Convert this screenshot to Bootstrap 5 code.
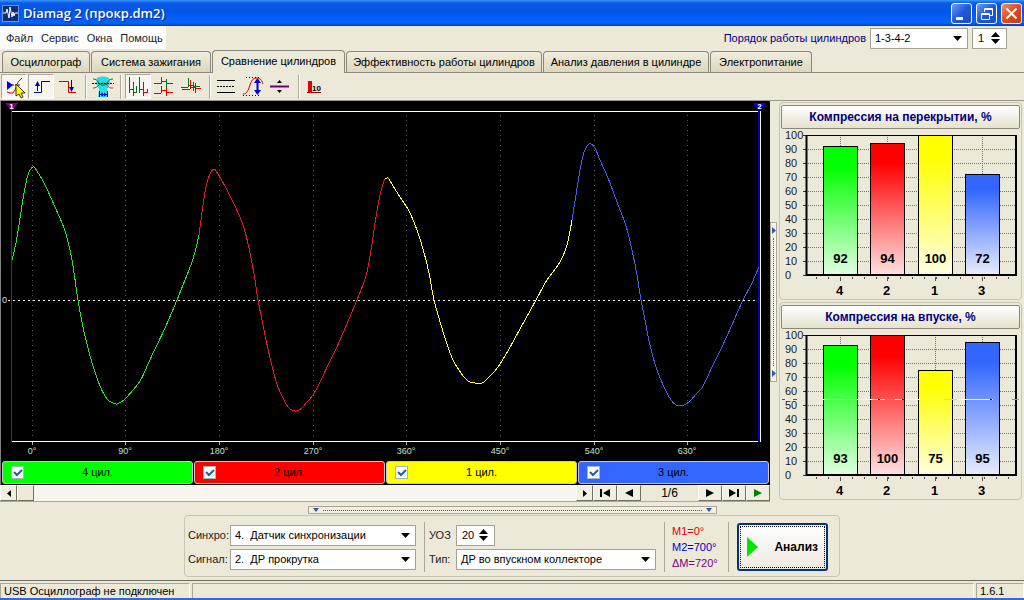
<!DOCTYPE html>
<html lang="ru">
<head>
<meta charset="utf-8">
<meta name="viewport" content="width=device-width, initial-scale=1">
<title>Diamag 2 (прокр.dm2)</title>
<link href="https://cdn.jsdelivr.net/npm/bootstrap@5.3.0/dist/css/bootstrap.min.css" rel="stylesheet">
<style>
:root { --face:#ece9d8; --line:#aca899; --dark:#716f64; --navy:#000080; }
body { font-family:"Liberation Sans",Arial,sans-serif; font-size:11px; line-height:16px; color:#000; background:var(--face); min-height:100vh; }
button { font:inherit; color:inherit; }
.titlebar { height:26px; padding:0 2px; background:linear-gradient(#3b96ff 0,#0a5ae8 3px,#0355e4 10px,#0560fb 20px,#0362f8 23px,#0040c0 26px); color:#fff; }
.titlebar h1 { font:600 13px/18px "Open Sans",sans-serif; text-shadow:1px 1px 1px #0a2a80; }
.winbtn { width:21px; height:21px; border:1px solid #fff; border-radius:3px; padding:0; background:linear-gradient(135deg,#6d9cf5,#2058dc 50%,#1c4bc6); }
.winclose { background:linear-gradient(135deg,#f0906c,#dd4b22 50%,#c43c14); }
.menurow { height:24px; }
.menubox { background:#fff; width:166px; height:23px; padding-left:6px; gap:8px; }
.menubox a { color:#222; }
.orderbox { padding-right:17px; color:var(--navy); }
.field { background-color:#fff; border:1px solid #a5a295; border-radius:0; font:inherit; color:#000; padding:0 20px 0 4px; min-height:0; height:21px; background-size:9px 5px; background-position:right 5px center;
 background-image:url("data:image/svg+xml,%3Csvg xmlns='http://www.w3.org/2000/svg' viewBox='0 0 9 5'%3E%3Cpath d='M0 0H9L4.500 5z'/%3E%3C/svg%3E"); }
.order-sel { width:98px; }
.spin { background:#fff; border:1px solid #a5a295; height:21px; }
.spin input { border:0; padding:0 0 0 5px; width:18px; font:inherit; outline:0; background:transparent; }
.spin input.two-digit { width:22px; }
.spin button { border:0; background:none; padding:0; width:11px; height:7px; display:flex; align-items:center; }
.tabrow { height:23px; padding-left:2px; border-bottom:1px solid #8b887b; flex-wrap:nowrap; align-items:flex-end; }
.tabrow .nav-link { height:21px; padding:2px 0 0; text-align:center; color:#000; line-height:16px; border:1px solid #8b887b; border-bottom:0; border-radius:4px 4px 0 0; background:linear-gradient(#f0edde,#dcd8bd); margin:0 1px 0 0; white-space:nowrap; }
.tabrow .nav-link.active { height:23px; margin-bottom:-1px; background:var(--face); color:#000; border-color:#8b887b; }
.tab-s { width:88px; } .tab-m { width:102px; } .tab-l { width:120px; } .tab-c { width:133px; } .tab-xl { width:166px; } .tab-xxl { width:196px; }
.tools { height:28px; border-bottom:1px solid #9a978a; padding:0 1px; }
.tool { width:26px; height:25px; border:1px solid transparent; padding:0; background:none; margin-right:1px; }
.tool svg { display:block; margin:-1px; }
.tool.on { background:#f7f5ef; border-color:#aca899 #fff #fff #aca899; }
.vsep { width:2px; height:24px; border-left:1px solid var(--line); border-right:1px solid #fff; margin:0 3px; }
.scopecol { border-left:1px solid #808080; background:#000; }
.scope { display:block; width:100%; height:auto; }
.chanrow { padding:0 1px 1px; gap:1px; }
.chan { flex:1 1 0; height:23px; border:1px solid #c8c8c8; border-radius:3px; position:relative; }
.chan label { text-align:center; width:100%; line-height:20px; }
.chan input { position:absolute; left:8px; top:4px; width:13px; height:13px; margin:0; border:1px solid #1c5180; border-radius:0 !important; background-color:#fff !important; }
.chan input:checked { border-color:#9bb; background-image:url("data:image/svg+xml,%3Csvg xmlns='http://www.w3.org/2000/svg' viewBox='0 0 13 13'%3E%3Cpath d='M3 6l3 3 5-5' fill='none' stroke='%23245ca8' stroke-width='2'/%3E%3C/svg%3E") !important; background-size:13px; }
.navrow { background:var(--face); height:17px; border-bottom:1px solid var(--line); }
.navbtn { height:16px; width:24px; border:1px solid; border-color:#fff var(--dark) var(--dark) #fff; background:#f1eee2; padding:0; display:flex; align-items:center; justify-content:center; }
.navbtn.slim { width:17px; }
.pageno { width:57px; text-align:center; font-size:12px; }
.hscroll { appearance:none; height:16px; margin:0; background:#f7f5ef; min-width:0; }
.hscroll::-webkit-slider-thumb { appearance:none; width:17px; height:16px; border:1px solid; border-color:#fff var(--dark) var(--dark) #fff; background:var(--face); border-radius:0; }
.vsplit { width:8px; }
.vgrip { width:7px; height:160px; border:1px solid var(--line); background:#f7f5ea; }
.vdots { border-left:1px dotted #555; }
.hgrip { width:409px; height:8px; border:1px solid var(--line); background:#f3f0e2; margin:4px auto 1px; }
.hdots { border-top:1px dotted #555; }
.sidecol { width:246px; padding:1px 2px 0 1px; gap:2px; }
.panel { border:1px solid #c9c5b2; border-radius:4px; padding:2px 1px 0; }
.panel h2 { font-size:12px; line-height:22px; height:24px; font-weight:bold; color:var(--navy); text-align:center; margin:0; border:1px solid #8b887b; border-radius:2px; background:linear-gradient(#fff,#e6e2cd); }
.panel svg { display:block; width:100%; height:auto; }
.bottom { width:656px; max-width:100%; height:62px; border:1px solid #c9c5b2; border-radius:4px; padding:2px 3px 0; margin:0 auto 3px; }
.rows { gap:3px; }
.flabel { width:42px; color:#222; }
.flabel.thin { width:27px; }
.wide-sel { width:186px; }
.type-sel { width:200px; }
.bar-v { width:1px; height:50px; background:var(--line); }
.marks { width:63px; padding-left:7px; }
.m-red { color:#e00000; } .m-blue { color:#0000d0; } .m-violet { color:#800080; }
.gobtn { width:91px; height:48px; border:2px solid #00337a; border-radius:3px; background:linear-gradient(#fff,#ece9df); outline:1px dotted #000; outline-offset:-4px; font-weight:bold; font-size:12px; }
.status { height:20px; border-top:1px solid var(--dark); border-bottom:2px solid #2b6fd6; padding-top:2px; gap:2px; }
.status > div { border:1px solid; border-color:var(--line) #fff #fff var(--line); border-bottom:0; padding-left:3px; line-height:15px; }
.st-a { width:190px; } .st-c { width:48px; }
</style>
</head>
<body class="d-flex flex-column">
<header class="titlebar d-flex align-items-center">
 <svg width="17" height="17" viewBox="0 0 17 17"><rect width="17" height="17" fill="#0a2f78"/><rect x=".5" y=".5" width="16" height="16" fill="none" stroke="#6f93d6"/><path d="M1 8h3l1-4 2 9 1-11 2 10 1-5 1 4 1-3h3" fill="none" stroke="#fff"/></svg>
 <h1 class="m-0 ms-1 flex-grow-1">Diamag 2 (прокр.dm2)</h1>
 <div class="d-flex gap-1">
  <button class="winbtn" aria-label="Свернуть"><svg width="19" height="19" class="d-block"><path d="M4 13h7v3H4z" fill="#fff"/></svg></button>
  <button class="winbtn" aria-label="Развернуть"><svg width="19" height="19" class="d-block"><path d="M7.500 8V4.500h8v7H13M7 5.500h9M4.500 9.500h8v6h-8zM4 10.500h9" fill="none" stroke="#fff"/></svg></button>
  <button class="winbtn winclose" aria-label="Закрыть"><svg width="19" height="19" class="d-block"><path d="M4.500 4.500l10 10m0-10l-10 10" stroke="#fff" stroke-width="2"/></svg></button>
 </div>
</header>

<div class="menurow d-flex justify-content-between">
 <nav class="menubox d-flex align-items-center">
  <a class="text-decoration-none" href="#">Файл</a><a class="text-decoration-none" href="#">Сервис</a><a class="text-decoration-none" href="#">Окна</a><a class="text-decoration-none" href="#">Помощь</a>
 </nav>
 <div class="orderbox d-flex align-items-center">
  <label for="order" class="me-1">Порядок работы цилиндров</label>
  <select id="order" class="form-select field order-sel me-1"><option>1-3-4-2</option></select>
  <div class="spin d-flex align-items-center"><input aria-label="Номер цилиндра" value="1"><div class="d-flex flex-column me-1"><button aria-label="Больше"><svg width="9" height="5"><path d="M0 5L4.500 0 9 5z"/></svg></button><button aria-label="Меньше"><svg width="9" height="5"><path d="M0 0H9L4.500 5z"/></svg></button></div></div>
 </div>
</div>

<nav class="nav nav-tabs tabrow" id="tabs">
 <a class="nav-link tab-s" href="#">Осциллограф</a>
 <a class="nav-link tab-l" href="#">Система зажигания</a>
 <a class="nav-link active tab-c" href="#">Сравнение цилиндров</a>
 <a class="nav-link tab-xxl" href="#">Эффективность работы цилиндров</a>
 <a class="nav-link tab-xl" href="#">Анализ давления в цилиндре</a>
 <a class="nav-link tab-m" href="#">Электропитание</a>
</nav>

<div class="tools d-flex align-items-center">
 <button class="tool on" aria-label="Маркеры"><svg width="26" height="25" fill="none"><path d="M6 18l3 1h3l2-3 3-8 4-4" stroke="#d00000"/><path d="M11 11h9" stroke="#0000c0" stroke-dasharray="2 1"/><path d="M6 7v9l6-5z" fill="#0000e0"/><path d="M15 10v12l3-2 2 4 2-1-2-4h4z" fill="#ffff00" stroke="#403000"/></svg></button>
 <button class="tool on" aria-label="Фронт"><svg width="26" height="25" fill="none"><path d="M6 18.500h7.500v-11H22" stroke="#0000a0"/><path d="M9.500 17V8" stroke="#0000a0"/><path d="M7 12l2.500-5 2.500 5z" fill="#0000a0"/></svg></button>
 <button class="tool" aria-label="Спад"><svg width="26" height="25" fill="none"><path d="M4 7.500h9.500v11H21" stroke="#d00000"/><path d="M16.500 6v9" stroke="#0000a0"/><path d="M14 13l2.500 5 2.500-5z" fill="#0000a0"/></svg></button>
 <div class="vsep"></div>
 <button class="tool" aria-label="Фильтр"><svg width="26" height="25" fill="none"><path d="M7 4c2-2 10-2 12 0l1 6-3 5 1 8H8l1-8-3-5z" fill="#20e0e8"/><path d="M3 5c3 0 4 1 6 4s6 3 8 0 3-4 6-4" stroke="#008020"/><path d="M3 14c3 0 4-1 6-3s6-3 8 0 3 3 6 3" stroke="#d03020"/><path d="M2 9.500h22" stroke="#000" stroke-dasharray="2 1"/><path d="M9.500 17v6m8-6v6M10 20.500h7" stroke="#0000c0"/><path d="M10 20.500l3-2v4zM17 20.500l-3-2v4z" fill="#0000c0"/></svg></button>
 <div class="vsep"></div>
 <button class="tool on" aria-label="Последовательно"><svg width="26" height="25" fill="none" shape-rendering="crispEdges"><path d="M4.500 3v16M4.500 15.500h4M8.500 8v14M8.500 18.500h3V12" stroke="#007020"/><path d="M14.500 3v16M14.500 15.500h4M18.500 8v14M18.500 18.500h4V15" stroke="#e00000"/></svg></button>
 <button class="tool" aria-label="Раздельно"><svg width="26" height="25" fill="none" shape-rendering="crispEdges"><path d="M2 9.500h7V3M9.500 3v5M10 7.500h4M14.500 5v9M15 9.500h6" stroke="#007020"/><path d="M2 19.500h7M9.500 12v7M10 16.500h4M14.500 13v9M15 18.500h6" stroke="#e00000"/></svg></button>
 <button class="tool" aria-label="Наложение"><svg width="26" height="25" fill="none" shape-rendering="crispEdges"><path d="M2 13.500h7M9.500 4v9M10 11.500h4M14.500 8v9M15 12.500h6" stroke="#007020"/><path d="M3 15.500h8M11.500 6v9M12 13.500h4M16.500 9v10M17 14.500h5" stroke="#e00000"/></svg></button>
 <div class="vsep"></div>
 <button class="tool" aria-label="Сетка"><svg width="26" height="25" fill="none"><path d="M3 6.500h18M3 18.500h18" stroke="#000"/><path d="M3 12.500h18" stroke="#000" stroke-dasharray="2 1"/></svg></button>
 <button class="tool" aria-label="Масштаб"><svg width="26" height="25" fill="none"><path d="M2 20c4 0 5-3 7-9s4-7 7-7 5 2 6 6" stroke="#d00000"/><path d="M5 3.500h14M2 21.500h18" stroke="#000" stroke-dasharray="1 2"/><path d="M16.500 7v12" stroke="#0000d0" stroke-width="2"/><path d="M13 9l3.500-5L20 9zM13 16l3.500 5 3.500-5z" fill="#0000d0"/></svg></button>
 <button class="tool" aria-label="Нулевая линия"><svg width="26" height="25" fill="none"><path d="M2 12.500h19" stroke="#700070" stroke-width="2"/><path d="M9 9l2.500-3L14 9zM9 16l2.500 3 2.500-3z" fill="#000"/></svg></button>
 <div class="vsep"></div>
 <button class="tool" aria-label="Гистограмма"><svg width="26" height="25"><path d="M5 7h4v11H5z" fill="#e00000"/><path d="M4 18.500h14" stroke="#a00000"/><text x="9" y="17" font-size="8" font-weight="bold">10</text></svg></button>
</div>

<main class="d-flex flex-grow-1">
 <section class="flex-grow-1 d-flex flex-column">
  <div class="scopecol">
   <svg class="scope" viewBox="1 101 769 360" id="scope" font-size="9">
    <g stroke="#5a5a5a" stroke-dasharray="1 4" shape-rendering="crispEdges"><path d="M32.500 115V440M125.500 115V440M219.500 115V440M313.500 115V440M406.500 115V440M500.500 115V440M594.500 115V440M687.500 115V440"/></g>
    <path d="M12 111.500H760.500V441.500H12" fill="none" stroke="#fff" shape-rendering="crispEdges"/>
    <path d="M32.500 442v3m93-3v3m94-3v3m94-3v3m93-3v3m94-3v3m94-3v3m93-3v3" stroke="#aaa"/>
    <path d="M8 300.500H760" stroke="#fff" stroke-dasharray="2 3" shape-rendering="crispEdges"/>
    <path d="M11.500 108V442" stroke="#7a1070" shape-rendering="crispEdges"/>
    <path d="M759 108V442" stroke="#0000c0" stroke-width="2"/>
    <path d="M5 103h13l-6 8z" fill="#800080"/><path d="M753 103h13l-6 8z" fill="#0000f0"/>
    <g id="waves" fill="none" shape-rendering="crispEdges"></g>
    <g fill="#fff" font-weight="bold" font-size="8" text-anchor="middle"><text x="11.500" y="109">1</text><text x="759.500" y="109">2</text></g>
    <text x="2" y="303" fill="#ddd">0</text>
    <g fill="#c8e0c8" text-anchor="middle"><text x="32" y="454">0°</text><text x="125" y="454">90°</text><text x="219" y="454">180°</text><text x="313" y="454">270°</text><text x="406" y="454">360°</text><text x="500" y="454">450°</text><text x="594" y="454">540°</text><text x="687" y="454">630°</text></g>
   </svg>
   <div class="chanrow d-flex">
    <div class="chan" style="background:#0f0"><input class="form-check-input" type="checkbox" id="c4" checked><label for="c4">4 цил.</label></div>
    <div class="chan" style="background:#f00"><input class="form-check-input" type="checkbox" id="c2" checked><label for="c2">2 цил.</label></div>
    <div class="chan" style="background:#ff0"><input class="form-check-input" type="checkbox" id="c1" checked><label for="c1">1 цил.</label></div>
    <div class="chan" style="background:#36f"><input class="form-check-input" type="checkbox" id="c3" checked><label for="c3">3 цил.</label></div>
   </div>
  </div>
  <div class="navrow d-flex">
   <button class="navbtn slim" aria-label="Влево"><svg width="4" height="7"><path d="M4 0v7L0 3.500z"/></svg></button>
   <input type="range" class="hscroll flex-grow-1" min="0" max="100" value="0" aria-label="Прокрутка">
   <button class="navbtn slim" aria-label="Вправо"><svg width="4" height="7"><path d="M0 0v7l4-3.500z"/></svg></button>
   <button class="navbtn" aria-label="В начало"><svg width="11" height="8"><path d="M0 0h2v8H0zM10 0v8L3 4z"/></svg></button>
   <button class="navbtn" aria-label="Назад"><svg width="8" height="8"><path d="M8 0v8L0 4z"/></svg></button>
   <span class="pageno">1/6</span>
   <button class="navbtn" aria-label="Вперёд"><svg width="8" height="8"><path d="M0 0v8l8-4z"/></svg></button>
   <button class="navbtn" aria-label="В конец"><svg width="11" height="8"><path d="M0 0v8l7-4zM8 0h2v8H8z"/></svg></button>
   <button class="navbtn" aria-label="Пуск"><svg width="8" height="8"><path d="M0 0v8l8-4z" fill="#008000"/></svg></button>
  </div>
 </section>
 <div class="vsplit d-flex align-items-center flex-shrink-0">
  <div class="vgrip d-flex flex-column align-items-center py-1 gap-1"><svg width="4" height="7"><path d="M0 0v7l4-3.500z" fill="#3355bb"/></svg><div class="vdots flex-grow-1"></div><svg width="4" height="7"><path d="M0 0v7l4-3.500z" fill="#3355bb"/></svg></div>
 </div>
 <aside class="sidecol d-flex flex-column flex-shrink-0">
  <section class="panel"><h2>Компрессия на перекрытии, %</h2><svg viewBox="781 128 239 170" class="bars" data-values="92,94,100,72"></svg></section>
  <section class="panel"><h2>Компрессия на впуске, %</h2><svg viewBox="781 128 239 170" class="bars" data-values="93,100,75,95" data-trace="1"></svg></section>
 </aside>
</main>

<div class="hgrip d-flex align-items-center px-1 gap-1"><svg width="6" height="4"><path d="M0 0h6L3 4z" fill="#3355aa"/></svg><div class="hdots flex-grow-1"></div><svg width="6" height="4"><path d="M0 0h6L3 4z" fill="#3355aa"/></svg></div>
<form class="bottom d-flex align-items-center">
 <div class="rows d-flex flex-column">
  <div class="d-flex align-items-center"><label class="flabel" for="sync">Синхро:</label><select id="sync" class="form-select field wide-sel"><option>4.&nbsp; Датчик синхронизации</option></select></div>
  <div class="d-flex align-items-center"><label class="flabel" for="sig">Сигнал:</label><select id="sig" class="form-select field wide-sel"><option>2.&nbsp; ДР прокрутка</option></select></div>
 </div>
 <div class="bar-v ms-2 me-1"></div>
 <div class="rows d-flex flex-column">
  <div class="d-flex align-items-center"><label class="flabel thin" for="uoz">УОЗ</label><div class="spin d-flex align-items-center"><input id="uoz" class="two-digit" value="20"><div class="d-flex flex-column me-1"><button type="button" aria-label="Больше"><svg width="9" height="5"><path d="M0 5L4.500 0 9 5z"/></svg></button><button type="button" aria-label="Меньше"><svg width="9" height="5"><path d="M0 0H9L4.500 5z"/></svg></button></div></div></div>
  <div class="d-flex align-items-center"><label class="flabel thin" for="type">Тип:</label><select id="type" class="form-select field type-sel"><option>ДР во впускном коллекторе</option></select></div>
 </div>
 <div class="bar-v ms-2"></div>
 <div class="marks"><div class="m-red">M1=0°</div><div class="m-blue">M2=700°</div><div class="m-violet">ΔM=720°</div></div>
 <div class="bar-v me-2"></div>
 <button type="button" class="gobtn d-flex align-items-center justify-content-between px-2"><svg width="11" height="20"><path d="M0 0v20l11-10z" fill="#00e800"/></svg><span>Анализ</span></button>
</form>
<footer class="status d-flex"><div class="st-a">USB Осциллограф не подключен</div><div class="flex-grow-1"></div><div class="st-c">1.6.1</div></footer>

<script src="https://cdn.jsdelivr.net/npm/bootstrap@5.3.0/dist/js/bootstrap.bundle.min.js"></script>
<script>
const waves = [
 ['#30e030', [12,260,16,243,19,225,24,193,28,175,33,167,37,171,45,185,55,207,65,231,72,260,78,300,84,332,93,366,100,386,107,399,113,403,117,404,121,402,126,398,140,381,148,364,155,349,165,328,177,300,185,280,192,262,196,248,199,235]],
 ['#e02020', [199,235,201,220,204,198,207,183,210,174,214,169,218,174,226,188,235,206,243,225,249,248,254,274,258,300,263,325,268,349,273,370,278,387,285,402,290,409,296,411,302,408,307,402,313,395,320,382,330,361,336,349,346,326,357,300,366,276,371,250,376,217,380,195,383,184,385,179]],
 ['#ffff40', [385,179,387,178,389,179,393,186,400,197,409,211,417,230,423,249,429,273,434,300,441,325,447,344,453,360,461,373,468,381,475,383,482,383,487,379,494,372,500,364,509,349,520,329,536,300,547,280,560,262,567,245,572,220]],
 ['#4060f0', [572,220,576,195,580,170,584,152,588,145,591,144,595,148,600,160,608,178,617,202,626,226,632,250,637,275,641,300,646,325,649,341,656,367,664,387,671,400,676,405,680,406,684,405,690,401,696,394,702,388,707,378,714,363,721,349,731,327,743,300,751,285,759,267]]
];
// Catmull-Rom spline through the sampled points
function spline(a) {
 const n = a.length / 2, p = i => { i = Math.max(0, Math.min(n - 1, i)); return [a[2*i], a[2*i+1]]; };
 let d = `M${a[0]} ${a[1]}`;
 for (let i = 0; i < n - 1; i++) {
  const [q, r, s, t] = [p(i-1), p(i), p(i+1), p(i+2)];
  d += `C${r[0]+(s[0]-q[0])/6} ${r[1]+(s[1]-q[1])/6} ${s[0]-(t[0]-r[0])/6} ${s[1]-(t[1]-r[1])/6} ${s[0]} ${s[1]}`;
 }
 return d;
}
document.getElementById('waves').innerHTML = waves.map(([c, a]) => `<path stroke="${c}" d="${spline(a)}"/>`).join('');

const colors = ['#00ff00', '#ff0000', '#ffff00', '#3366ff'], names = [4, 2, 1, 3], lefts = [823, 870, 918, 965];
document.querySelectorAll('.bars').forEach((svg, k) => {
 const values = svg.dataset.values.split(',').map(Number);
 let h = '<defs>' + colors.map((c, i) => `<linearGradient id="g${k}${i}" x1="0" y1="0" x2="0" y2="1"><stop offset=".15" stop-color="${c}"/><stop offset="1" stop-color="${c}" stop-opacity=".12"/></linearGradient>`).join('') + '</defs>';
 for (let v = 0; v <= 100; v += 10) {
  const y = 274 - v * 1.4;
  if (v && v < 100) h += `<path d="M808 ${y + .5}H1015" stroke="#77746a" stroke-dasharray="1 1" shape-rendering="crispEdges"/>`;
  h += `<path d="M803 ${y + .5}h3" stroke="#333"/><text x="785" y="${y + 4}" font-size="11" fill="#222">${v}</text>`;
 }
 for (let x = 816; x < 1010; x += 12) h += `<path d="M${x + .5} 276v2" stroke="#555"/>`;
 lefts.forEach(x => { h += `<path d="M${x + 17.5} 136V272" stroke="#77746a" stroke-dasharray="1 1" shape-rendering="crispEdges"/><path d="M${x + 17.5} 276v4" stroke="#555"/>`; });
 h += '<path d="M806 134.500H1016" stroke="#000"/><path d="M806.500 134V275M1016 134V275M806 274H1017" stroke="#000" stroke-width="2" fill="none"/>';
 values.forEach((v, i) => {
  const top = Math.round(274 - v * 1.4), box = `x="${lefts[i] + .5}" y="${top + .5}" width="34" height="${273 - top}"`;
  h += `<rect ${box} fill="#fff"/><rect ${box} fill="url(#g${k}${i})" stroke="#000"/>`
   + `<g font-size="13" font-weight="bold" text-anchor="middle"><text x="${lefts[i] + 17.5}" y="262">${v}</text><text x="${lefts[i] + 16.5}" y="294">${names[i]}</text></g>`;
 });
 if (svg.dataset.trace) h += '<g shape-rendering="crispEdges"><path d="M823 198.500H993" stroke="#ffffa0"/><path d="M782 198.500h3m8 0h4" stroke="#4050c0"/><path d="M885 198.500h10m117 0h7" stroke="#30e030"/><path d="M845 198.500h12m86 0h14" stroke="#e8e820"/><path d="M878 198.500h2m22 0h3m85 0h2" stroke="#222"/></g>';
 svg.innerHTML = h;
});
</script>
</body>
</html>
